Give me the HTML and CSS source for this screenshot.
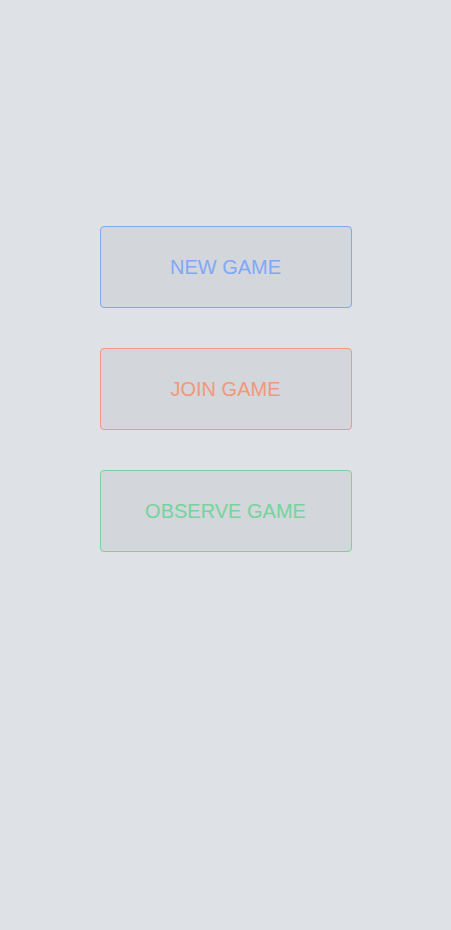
FILE: index.html
```html
<!DOCTYPE html>
<html>
<head>
<meta charset="utf-8">
<link rel="stylesheet" href="styles.css">
</head>
<body>
<main class="menu">
  <button class="btn btn-new">NEW GAME</button>
  <button class="btn btn-join">JOIN GAME</button>
  <button class="btn btn-observe">OBSERVE GAME</button>
</main>
</body>
</html>
```
FILE: styles.css
```css
html, body {
  margin: 0;
  padding: 0;
  background: #dee1e6;
  height: 100%;
}
.menu {
  display: flex;
  flex-direction: column;
  align-items: center;
  gap: 40px;
  padding-top: 226px;
}
.btn {
  box-sizing: border-box;
  width: 252px;
  height: 82px;
  margin: 0;
  padding: 0;
  background: #d3d6db;
  border: 1px solid;
  border-radius: 4px;
  font-family: "Liberation Sans", Arial, sans-serif;
  font-size: 20px;
  cursor: pointer;
}
.btn-new { border-color: #7fa8f8; color: #7fa8f8; }
.btn-join { border-color: #f4977a; color: #f4977a; }
.btn-observe { border-color: #74d49c; color: #74d49c; }
```
